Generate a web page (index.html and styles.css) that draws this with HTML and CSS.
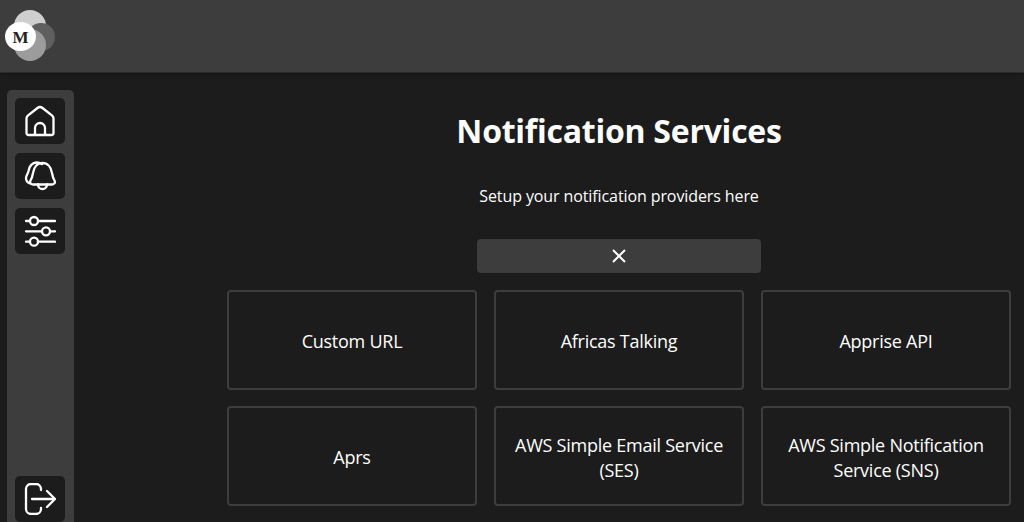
FILE: index.html
```html
<!DOCTYPE html>
<html lang="en">
<head>
<meta charset="utf-8">
<title>Notification Services</title>
<link rel="stylesheet" href="styles.css">
</head>
<body>
<header class="topbar">
  <div class="logo">
    <span class="blob blob-top"></span>
    <span class="blob blob-right"></span>
    <span class="blob blob-bottom"></span>
    <span class="logo-m">M</span>
  </div>
</header>
<div class="body-row">
  <nav class="sidebar">
    <div class="nav-group">
      <a class="nav-btn">
        <svg viewBox="0 0 32 32" class="icon"><path d="M2.500 13.500c0-1.200.4-2 1.300-2.800L13.500 3a4 4 0 0 1 5 0l9.700 7.700c.9.800 1.300 1.600 1.300 2.800V28a2 2 0 0 1-2 2h-23a2 2 0 0 1-2-2Z"/><path d="M11 30v-7a5 5 0 0 1 10 0v7"/></svg>
      </a>
      <a class="nav-btn">
        <svg viewBox="0 0 32 32" class="icon"><path d="M6 23.500c-2.500-.8-4-3-4-5.500 0-2.500 2-4 2.500-7C5.200 6 8.500 2.500 12.500 2.500c2.200 0 4 .5 5.500 1.500"/><path d="M9 24.500c-2.500 0-3.500-2-2.500-4 1.500-2.500 2-4.500 2.500-7.500C9.800 7 13.500 3 18.500 3s8.700 4 9.500 10c.5 3 1 5 2.500 7.500 1 2 0 4-2.500 4Z"/><path d="M14 24.500a4.500 4.500 0 0 0 9 0"/></svg>
      </a>
      <a class="nav-btn">
        <svg viewBox="0 0 32 32" class="icon"><path d="M2 6h4M14 6h17M2 16.300h16M26 16.300h5M2 26.700h4M14 26.700h17"/><circle cx="10" cy="6" r="4"/><circle cx="22" cy="16.300" r="4"/><circle cx="10" cy="26.700" r="4"/></svg>
      </a>
    </div>
    <a class="nav-btn">
      <svg viewBox="0 0 32 32" class="icon"><path d="M17 7V6a5 5 0 0 0-5-5H7a5 5 0 0 0-5 5v20a5 5 0 0 0 5 5h5a5 5 0 0 0 5-5v-1"/><path d="M8 16h23M23 8l8 8-8 8"/></svg>
    </a>
  </nav>
  <main class="content">
    <h1 class="title">Notification Services</h1>
    <p class="subtitle">Setup your notification providers here</p>
    <button class="close-bar" type="button">
      <svg viewBox="0 0 14 14" class="close-icon"><path d="M1 1l12 12M13 1 1 13"/></svg>
    </button>
    <div class="service-grid">
      <div class="service">Custom URL</div>
      <div class="service">Africas Talking</div>
      <div class="service">Apprise API</div>
      <div class="service">Aprs</div>
      <div class="service">AWS Simple Email Service (SES)</div>
      <div class="service">AWS Simple Notification Service (SNS)</div>
    </div>
  </main>
</div>
</body>
</html>
```
FILE: styles.css
```css
* { box-sizing: border-box; }
html, body { margin: 0; height: 100%; overflow: hidden; }
body {
  background: #1c1c1c;
  color: #fff;
  font-family: "Open Sans", "Noto Sans", sans-serif;
  display: flex;
  flex-direction: column;
}
.topbar {
  height: 73px;
  flex: none;
  background: #3d3d3d;
  border-bottom: 1px solid #2a2a2a;
  box-shadow: 0 1px 3px rgba(0,0,0,.4);
}
.logo { position: relative; width: 60px; height: 64px; }
.blob { position: absolute; border-radius: 50%; }
.blob-top { left: 14px; top: 10px; width: 32px; height: 32px; background: #cfcfcf; }
.blob-right { left: 27px; top: 23px; width: 28px; height: 28px; background: #5f5f5f; }
.blob-bottom { left: 14px; top: 29px; width: 32px; height: 32px; background: #9c9c9c; }
.logo-m {
  position: absolute;
  left: 5px; top: 22px;
  width: 31px; height: 29px;
  border-radius: 50%;
  background: #fff;
  color: #222;
  font: 700 17px/32px "Liberation Serif", serif;
  text-align: center;
}
.body-row { flex: 1; display: flex; min-height: 0; }
.sidebar {
  flex: none;
  width: 67px;
  margin: 17px 0 0 7px;
  padding: 8px 8px 0;
  background: #3d3d3d;
  border-radius: 5px 5px 0 0;
  display: flex;
  flex-direction: column;
  justify-content: space-between;
}
.nav-group { display: flex; flex-direction: column; gap: 9px; }
.nav-btn {
  width: 50px; height: 46px;
  background: #1c1c1c;
  border-radius: 5px;
  display: flex;
  align-items: center;
  justify-content: center;
}
.icon {
  width: 32px; height: 32px;
  fill: none;
  stroke: #fff;
  stroke-width: 2.300;
  stroke-linecap: round;
  stroke-linejoin: round;
}
.content {
  flex: 1;
  min-width: 0;
  display: flex;
  flex-direction: column;
  align-items: center;
  padding: 36px 0 0 140px;
}
.title { margin: 0; font-size: 32px; font-weight: 700; line-height: 44px; letter-spacing: -0.25px; }
.subtitle { margin: 32px 0 0; font-size: 16px; line-height: 22px; letter-spacing: -0.1px; }
.close-bar {
  margin-top: 32px;
  width: 284px; height: 34px;
  background: #3d3d3d;
  border: 0;
  border-radius: 4px;
  padding: 0;
  display: flex;
  align-items: center;
  justify-content: center;
}
.close-icon { width: 14px; height: 14px; fill: none; stroke: #fff; stroke-width: 2; }
.service-grid {
  margin-top: 17px;
  display: grid;
  grid-template-columns: repeat(3, 250px);
  grid-auto-rows: 100px;
  gap: 16px 17px;
  flex: none;
}
.service {
  border: 2px solid #3d3d3d;
  border-radius: 4px;
  display: flex;
  align-items: center;
  justify-content: center;
  text-align: center;
  padding: 3px 16px 0;
  font-size: 18px;
  line-height: 25px;
  letter-spacing: -0.25px;
}
```
